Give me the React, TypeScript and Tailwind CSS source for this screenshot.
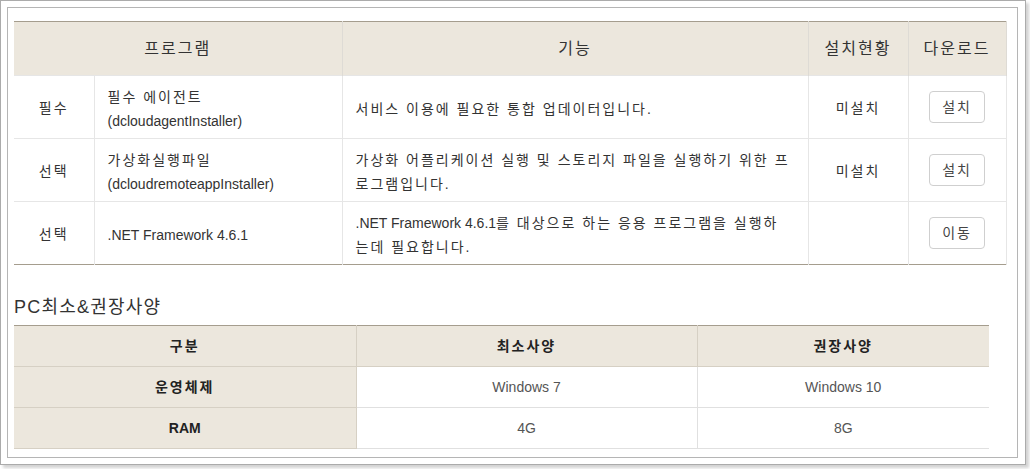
const font = "font-['Liberation_Sans','Noto_Sans_CJK_KR',sans-serif]";

interface Program {
  kind: string;
  name: string[];
  desc: string[];
  status: string;
  action: string;
}

const programs: Program[] = [
  {
    kind: "필수",
    name: ["필수 에이전트", "(dcloudagentInstaller)"],
    desc: ["서비스 이용에 필요한 통합 업데이터입니다."],
    status: "미설치",
    action: "설치",
  },
  {
    kind: "선택",
    name: ["가상화실행파일", "(dcloudremoteappInstaller)"],
    desc: ["가상화 어플리케이션 실행 및 스토리지 파일을 실행하기 위한 프", "로그램입니다."],
    status: "미설치",
    action: "설치",
  },
  {
    kind: "선택",
    name: [".NET Framework 4.6.1"],
    desc: [".NET Framework 4.6.1를 대상으로 하는 응용 프로그램을 실행하", "는데 필요합니다."],
    status: "",
    action: "이동",
  },
];

const specs = [
  { label: "운영체제", min: "Windows 7", rec: "Windows 10" },
  { label: "RAM", min: "4G", rec: "8G" },
];

// hangul in the original is set wider than Noto draws it, so space those runs out
const Ko = ({ t }: { t: string }) => (
  <>
    {t.split(/([가-힣][가-힣 ]*)/).map((s, i) =>
      /[가-힣]/.test(s) ? (
        <span key={i} className="tracking-[2px]">
          {s}
        </span>
      ) : (
        s
      )
    )}
  </>
);

const App = () => {
  return (
    <div className={`${font} w-[1030px] h-[469px] bg-white text-[#333]`}>
      <div className="w-[1026px] h-[465px] border border-[#ababab] bg-white p-[6px] shadow-[3px_3px_3px_rgba(0,0,0,0.18)]">
        <div className="w-[1011px] h-[451px] border border-[#b5b5b5] pl-[6px] pt-[13px]">
          <table className="table-fixed w-[992px] border-collapse border-t border-b border-[#a59d8e]">
            <colgroup>
              <col className="w-[80px]" />
              <col className="w-[248px]" />
              <col className="w-[466px]" />
              <col className="w-[100px]" />
              <col className="w-[98px]" />
            </colgroup>
            <thead>
              <tr className="h-[54px] bg-[#ece7dd] text-[16px] text-[#333] tracking-[2px]">
                <th colSpan={2} className="font-normal border-r border-[#dedbd5]">
                  프로그램
                </th>
                <th className="font-normal border-r border-[#dedbd5]">기능</th>
                <th className="font-normal border-r border-[#dedbd5]">설치현황</th>
                <th className="font-normal border-r border-[#dedbd5]">다운로드</th>
              </tr>
            </thead>
            <tbody className="text-[14px] leading-[24px] text-[#333]">
              {programs.map((p, i) => (
                <tr key={i} className="h-[63px] border-t border-[#e6e6e6]">
                  <td className="text-center pt-[2px] border-r border-[#e6e6e6]">
                    <Ko t={p.kind} />
                  </td>
                  <td className="px-[13px] pt-[3px] border-r border-[#e6e6e6]">
                    {p.name.map((n) => (
                      <div key={n}>
                        <Ko t={n} />
                      </div>
                    ))}
                  </td>
                  <td className="pl-[13px] pr-[10px] pt-[3px] border-r border-[#e6e6e6]">
                    {p.desc.map((d) => (
                      <div key={d} className="whitespace-nowrap">
                        <Ko t={d} />
                      </div>
                    ))}
                  </td>
                  <td className="text-center pt-[2px] border-r border-[#e6e6e6]">
                    <Ko t={p.status} />
                  </td>
                  <td className="text-center border-r border-[#e6e6e6]">
                    <button className="w-[56px] h-[32px] border border-[#cfcfcf] rounded-[4px] bg-white text-[14px] text-[#444] tracking-[2px]">
                      {p.action}
                    </button>
                  </td>
                </tr>
              ))}
            </tbody>
          </table>

          <h3 className="mt-[30px] mb-[6px] text-[18px] leading-[24px] font-normal text-[#333] tracking-[1.2px]">
            PC최소&amp;권장사양
          </h3>

          <table className="table-fixed w-[975px] border-collapse border-t border-[#a59d8e] text-[14px]">
            <colgroup>
              <col className="w-[342px]" />
              <col className="w-[341px]" />
              <col className="w-[292px]" />
            </colgroup>
            <thead>
              <tr className="h-[41px] bg-[#ece7dd] text-[#222] tracking-[2px]">
                <th className="font-bold border-r border-b border-[#d6d0c4]">구분</th>
                <th className="font-bold border-r border-b border-[#d6d0c4]">최소사양</th>
                <th className="font-bold border-b border-[#d6d0c4]">권장사양</th>
              </tr>
            </thead>
            <tbody>
              {specs.map((s) => (
                <tr key={s.label} className="h-[41px]">
                  <td className="text-center font-bold text-[#222] bg-[#ece7dd] border-r border-b border-[#d6d0c4]">
                    <Ko t={s.label} />
                  </td>
                  <td className="text-center text-[#555] border-r border-b border-[#e0e0e0]">{s.min}</td>
                  <td className="text-center text-[#555] border-b border-[#e0e0e0]">{s.rec}</td>
                </tr>
              ))}
            </tbody>
          </table>
        </div>
      </div>
    </div>
  );
};

export default App;
